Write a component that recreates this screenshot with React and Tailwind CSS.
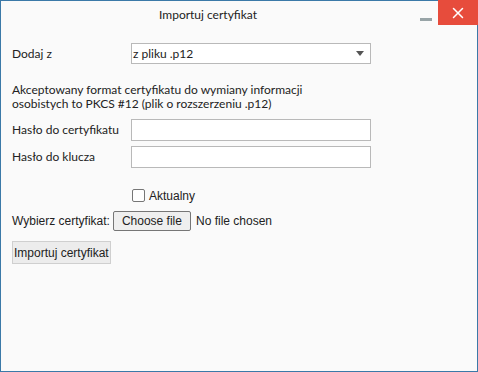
import { X } from 'lucide-react';

const segoe = { fontFamily: 'Lato, "Open Sans", sans-serif' };

export default function App() {
  return (
    <div className="relative w-[478px] h-[372px] bg-[#fafafa] border border-[#3b79a8] text-[#222] flex flex-col">
      {/* title bar */}
      <div className="flex h-[23px] items-center">
        <div className="flex-1 text-center text-[12px] pt-[4px]" style={segoe}>
          Importuj certyfikat
        </div>
        <div className="w-[62px] h-full flex">
          <div className="w-[22px] h-full flex items-end justify-center pb-[3px]">
            <div className="w-[12px] h-[3px] bg-[#98a4a7]"></div>
          </div>
        </div>
      </div>
      <button className="absolute top-[-1px] right-[-1px] w-[40px] h-[25px] bg-[#e74c3c] flex items-center justify-center">
        <X size={18} strokeWidth={2} className="text-white" />
      </button>

      {/* form */}
      <div className="pl-[11px] text-[12px]" style={segoe}>
        <div className="flex items-center mt-[19px] h-[21px]">
          <span className="w-[119px]">Dodaj z</span>
          <div className="w-[240px] h-[21px] bg-white border border-[#b9b9b9] flex items-center justify-between pl-[1px] pr-[6px]">
            <span>z pliku .p12</span>
            <svg width="8" height="5" viewBox="0 0 8 5"><path d="M0 0h8L4 5z" fill="#555" /></svg>
          </div>
        </div>

        <p className="mt-[19px] leading-[14px]">
          Akceptowany format certyfikatu do wymiany informacji<br />
          osobistych to PKCS #12 (plik o rozszerzeniu .p12)
        </p>

        <div className="flex items-center mt-[8px]">
          <span className="w-[119px]">Hasło do certyfikatu</span>
          <div className="w-[240px] h-[22px] bg-white border border-[#b9b9b9]"></div>
        </div>
        <div className="flex items-center mt-[5px]">
          <span className="w-[119px]">Hasło do klucza</span>
          <div className="w-[240px] h-[22px] bg-white border border-[#b9b9b9]"></div>
        </div>
      </div>

      <div className="pl-[11px] text-[12px]" style={{ fontFamily: '"Liberation Sans", Arial, sans-serif' }}>
        <label className="flex items-center ml-[120px] mt-[21px] h-[13px]">
          <span className="w-[13px] h-[13px] border border-[#767676] rounded-[2px] bg-white"></span>
          <span className="ml-[4px]">Aktualny</span>
        </label>

        <div className="flex items-center mt-[9px] h-[20px]">
          <span>Wybierz certyfikat:</span>
          <span className="ml-[3px] h-[20px] px-[8px] flex items-center bg-[#efefef] border border-[#767676] rounded-[2px]">Choose file</span>
          <span className="ml-[5px]">No file chosen</span>
        </div>

        <button className="mt-[10px] h-[23px] px-[1px] bg-[#ececec] border border-[#cfcfcf] text-[12px] text-[#222]">
          Importuj certyfikat
        </button>
      </div>
    </div>
  );
}
